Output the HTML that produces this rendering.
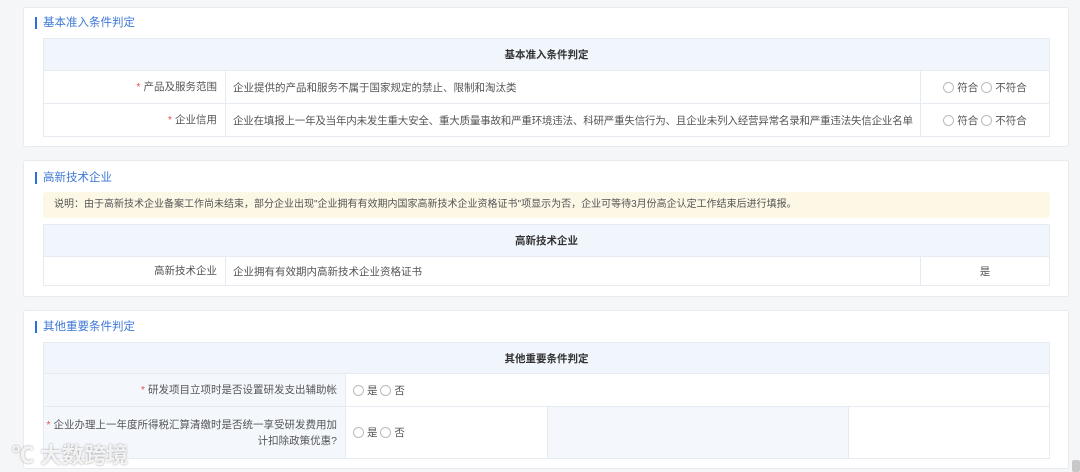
<!DOCTYPE html>
<html><head><meta charset="utf-8"><style>
*{margin:0;padding:0;box-sizing:border-box}
body{width:1080px;height:472px;overflow:hidden;background:#f5f6f8;font-family:"Liberation Sans","Noto Sans CJK SC",sans-serif;font-size:10.5px;color:#555;position:relative}
.card{position:absolute;left:23px;width:1046px;background:#fff;border:1px solid #e8eaee;border-radius:3px}
.title{position:absolute;left:11px;font-size:11.5px;color:#3f79d6;padding-left:6px;border-left:2px solid #2f6fd8;line-height:12px}
.a{position:absolute;border:1px solid #e6ebf1;display:flex;align-items:center;white-space:nowrap}
.h{background:#f1f6fd;justify-content:center;font-weight:bold;color:#333}
.l{justify-content:flex-end;padding-right:8px;text-align:right;line-height:16px}
.lb{background:#f4f8fd}
.c{padding-left:7px}
.r{color:#e5524d;margin-right:3px}
.o{display:inline-block;width:11px;height:11px;border:1px solid #bbb;border-radius:50%;vertical-align:-2px;margin-right:3px}
</style></head><body>
<div class="card" style="top:7px;height:140px"></div>
<div class="title" style="top:17px;left:35px">基本准入条件判定</div>
<div class="a h" style="left:43px;top:38px;width:1007px;height:33px">基本准入条件判定</div>
<div class="a l" style="left:43px;top:70px;width:183px;height:34px"><span class="r">*</span>产品及服务范围</div>
<div class="a c" style="left:225px;top:70px;width:696px;height:34px">企业提供的产品和服务不属于国家规定的禁止、限制和淘汰类</div>
<div class="a" style="left:920px;top:70px;width:130px;height:34px;justify-content:center"><span class="o"></span>符合&nbsp;<span class="o"></span>不符合</div>
<div class="a l" style="left:43px;top:103px;width:183px;height:34px"><span class="r">*</span>企业信用</div>
<div class="a c" style="left:225px;top:103px;width:696px;height:34px;letter-spacing:-0.2px">企业在填报上一年及当年内未发生重大安全、重大质量事故和严重环境违法、科研严重失信行为、且企业未列入经营异常名录和严重违法失信企业名单</div>
<div class="a" style="left:920px;top:103px;width:130px;height:34px;justify-content:center"><span class="o"></span>符合&nbsp;<span class="o"></span>不符合</div>

<div class="card" style="top:160px;height:137px"></div>
<div class="title" style="top:172px;left:35px">高新技术企业</div>
<div style="position:absolute;left:43px;top:192px;width:1007px;height:26px;background:#fdf7e6;border-radius:3px;line-height:26px;padding-left:11px;font-size:10px;white-space:nowrap">说明：由于高新技术企业备案工作尚未结束，部分企业出现"企业拥有有效期内国家高新技术企业资格证书"项显示为否，企业可等待3月份高企认定工作结束后进行填报。</div>
<div class="a h" style="left:43px;top:224px;width:1007px;height:33px">高新技术企业</div>
<div class="a l" style="left:43px;top:256px;width:183px;height:30px">高新技术企业</div>
<div class="a c" style="left:225px;top:256px;width:696px;height:30px">企业拥有有效期内高新技术企业资格证书</div>
<div class="a" style="left:920px;top:256px;width:130px;height:30px;justify-content:center">是</div>

<div class="card" style="top:310px;height:159px"></div>
<div class="title" style="top:321px;left:35px">其他重要条件判定</div>
<div class="a h" style="left:43px;top:342px;width:1007px;height:32px">其他重要条件判定</div>
<div class="a l lb" style="left:43px;top:373px;width:303px;height:34px"><span class="r">*</span>研发项目立项时是否设置研发支出辅助帐</div>
<div class="a c" style="left:345px;top:373px;width:705px;height:34px"><span class="o"></span>是&nbsp;<span class="o"></span>否</div>
<div class="a l lb" style="left:43px;top:406px;width:303px;height:53px"><div><span class="r">*</span>企业办理上一年度所得税汇算清缴时是否统一享受研发费用加<br>计扣除政策优惠?</div></div>
<div class="a c" style="left:345px;top:406px;width:203px;height:53px"><span class="o"></span>是&nbsp;<span class="o"></span>否</div>
<div class="a" style="left:547px;top:406px;width:302px;height:53px;background:#f4f8fd"></div>
<div class="a" style="left:848px;top:406px;width:202px;height:53px"></div>
<div style="position:absolute;left:1072px;top:460px;width:8px;height:12px;background:#c8c8c8;border-radius:2px"></div>
<div style="position:absolute;left:12px;top:438px;font-size:22px;color:rgba(255,255,255,.85);text-shadow:0 0 2px #999;font-weight:bold">℃ 大数跨境</div>
</body></html>
